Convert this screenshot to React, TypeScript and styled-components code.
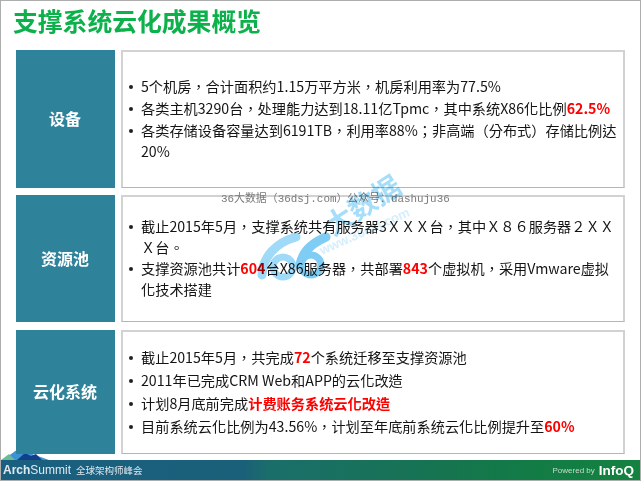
import styled, { createGlobalStyle } from 'styled-components';

const GlobalStyle = createGlobalStyle`
  html, body {
    margin: 0;
    padding: 0;
    background: #fff;
  }
`;

type Part = { text: string; red?: boolean };
type Item = Part[];
type Section = { label: string; height: number; gap: number; spacing: number; items: Item[] };

const sections: Section[] = [
  {
    label: '设备',
    height: 138,
    gap: 7,
    spacing: 1,
    items: [
      [{ text: '5个机房，合计面积约1.15万平方米，机房利用率为77.5%' }],
      [{ text: '各类主机3290台，处理能力达到18.11亿Tpmc，其中系统X86化比例' }, { text: '62.5%', red: true }],
      [{ text: '各类存储设备容量达到6191TB，利用率88%；非高端（分布式）存储比例达20%' }],
    ],
  },
  {
    label: '资源池',
    height: 127,
    gap: 8,
    spacing: 0,
    items: [
      [{ text: '截止2015年5月，支撑系统共有服务器3ＸＸＸ台，其中Ｘ８６服务器２ＸＸＸ台。' }],
      [
        { text: '支撑资源池共计' },
        { text: '604', red: true },
        { text: '台X86服务器，共部署' },
        { text: '843', red: true },
        { text: '个虚拟机，采用Vmware虚拟化技术搭建' },
      ],
    ],
  },
  {
    label: '云化系统',
    height: 124,
    gap: 0,
    spacing: 2,
    items: [
      [{ text: '截止2015年5月，共完成' }, { text: '72', red: true }, { text: '个系统迁移至支撑资源池' }],
      [{ text: '2011年已完成CRM Web和APP的云化改造' }],
      [{ text: '计划8月底前完成' }, { text: '计费账务系统云化改造', red: true }],
      [{ text: '目前系统云化比例为43.56%，计划至年底前系统云化比例提升至' }, { text: '60%', red: true }],
    ],
  },
];

// 36大数据 stamp across the middle of the slide
const Watermark = () => (
  <WatermarkArt viewBox="0 0 170 105" aria-hidden="true">
    <g fill="none" strokeLinecap="round">
      <path d="M12 100C13 82 25 68 46 62" stroke="#9fdaf8" strokeWidth="9" />
      <circle cx="33" cy="92" r="10" stroke="#9fdaf8" strokeWidth="7" />
      <path d="M50 90C52 77 62 68 76 62" stroke="#7fcdf5" strokeWidth="9" />
      <circle cx="61" cy="90" r="10" stroke="#7fcdf5" strokeWidth="7" />
    </g>
    <text
      transform="translate(83 62) rotate(-33)"
      fontSize="28"
      fontWeight="700"
      fill="#a6def9"
      fontFamily="'Noto Sans CJK SC', sans-serif"
    >
      大数据
    </text>
    <text
      transform="translate(72 80) rotate(-24)"
      fontSize="13"
      fontWeight="700"
      fill="#d6effc"
      fontFamily="'Liberation Sans', sans-serif"
    >
      www.36dsj.com
    </text>
  </WatermarkArt>
);

export default function App() {
  return (
    <Page>
      <GlobalStyle />
      <Slide>
        <Peak viewBox="0 0 50 11" aria-hidden="true">
          <polygon points="2,11 17,0 48,11" fill="#3a93d2" />
          <polygon points="0,11 8,5 14,11" fill="#6fb89a" />
          <polygon points="16,11 24,4 30,7 35,5 41,11" fill="#123f8c" />
        </Peak>
        <Title>支撑系统云化成果概览</Title>
        <Rows>
          {sections.map((s) => (
            <Row key={s.label} $height={s.height} $gap={s.gap}>
              <Label>{s.label}</Label>
              <Box>
                <List $spacing={s.spacing}>
                  {s.items.map((item, i) => (
                    <Bullet key={i}>
                      {item.map((p, j) => (p.red ? <Red key={j}>{p.text}</Red> : <span key={j}>{p.text}</span>))}
                    </Bullet>
                  ))}
                </List>
              </Box>
            </Row>
          ))}
        </Rows>
        <Notice>36大数据（36dsj.com）公众号：dashuju36</Notice>
        <Watermark />
      </Slide>
      <Footer>
        <Brand>
          <b>Arch</b>Summit
        </Brand>
        <BrandCn>全球架构师峰会</BrandCn>
        <Powered>
          Powered by <InfoQ>InfoQ</InfoQ>
        </Powered>
      </Footer>
    </Page>
  );
}

const Page = styled.div`
  width: 641px;
  height: 481px;
  box-sizing: border-box;
  border: 1px solid #adadad;
  display: flex;
  flex-direction: column;
  overflow: hidden;
  font-family: 'Noto Sans CJK TC', 'Liberation Sans', sans-serif;
`;
const Slide = styled.div`
  position: relative;
  flex: 1;
  min-height: 0;
  padding: 0 15px;
`;
const Title = styled.h1`
  margin: 0 0 0 -3px;
  height: 49px;
  padding-top: 2px;
  box-sizing: border-box;
  font-family: 'Noto Sans CJK SC', sans-serif;
  font-size: 24.8px;
  line-height: 34px;
  font-weight: 700;
  color: #0db14b;
`;
const Rows = styled.div`
  position: relative;
  display: flex;
  flex-direction: column;
`;
const Row = styled.div<{ $height: number; $gap: number }>`
  display: flex;
  gap: 6px;
  height: ${(p) => p.$height}px;
  margin-bottom: ${(p) => p.$gap}px;
`;
const Label = styled.div`
  width: 99px;
  flex: none;
  box-sizing: border-box;
  padding: 0 1px 2px 0;
  display: flex;
  align-items: center;
  justify-content: center;
  background: #2e8299;
  color: #fff;
  font-family: 'Noto Sans CJK SC', sans-serif;
  font-size: 16px;
  font-weight: 700;
`;
const Box = styled.div`
  flex: 1;
  min-width: 0;
  box-sizing: border-box;
  display: flex;
  align-items: center;
  background: #fff;
  border: 2px solid #d2d2d2;
  border-bottom: 1px solid #b5b5b5;
  padding: 0 3px 2px 3px;
`;
const List = styled.ul<{ $spacing: number }>`
  margin: 0;
  padding: 0;
  list-style: none;
  display: flex;
  flex-direction: column;
  gap: ${(p) => p.$spacing}px;
`;
const Bullet = styled.li`
  position: relative;
  padding-left: 15px;
  font-size: 14.2px;
  line-height: 21px;
  color: #141414;

  &::before {
    content: '';
    position: absolute;
    left: 3px;
    top: 9px;
    width: 4px;
    height: 4px;
    border-radius: 50%;
    background: #222;
  }
`;
const Red = styled.span`
  color: #ff0000;
  font-weight: 700;
`;
const Notice = styled.div`
  position: absolute;
  left: 220px;
  top: 191px;
  font-family: 'Liberation Mono', 'Noto Sans CJK SC', monospace;
  font-size: 10.9px;
  line-height: 14px;
  color: #7a7a7a;
  white-space: nowrap;
`;
const WatermarkArt = styled.svg`
  position: absolute;
  left: 249px;
  top: 174px;
  width: 170px;
  height: 105px;
  overflow: visible;
  mix-blend-mode: multiply;
  pointer-events: none;
`;
const Peak = styled.svg`
  position: absolute;
  left: 0;
  bottom: 0;
  width: 50px;
  height: 11px;
`;
const Footer = styled.div`
  flex: none;
  height: 20px;
  display: flex;
  align-items: center;
  padding: 0 6px 0 2px;
  box-sizing: border-box;
  color: #dfe9ee;
  background: linear-gradient(90deg, #1b5f80 0%, #1a6079 38%, #1a6e6a 42%, #16744f 70%, #127b46 82%, #14823f 100%);
`;
const Brand = styled.span`
  font-family: 'Liberation Sans', sans-serif;
  font-size: 12px;
  margin-right: 5px;
`;
const BrandCn = styled.span`
  font-family: 'Noto Sans CJK SC', sans-serif;
  font-size: 9.5px;
`;
const Powered = styled.span`
  margin-left: auto;
  font-family: 'Liberation Sans', sans-serif;
  font-size: 8px;
  color: #c9dccf;
  display: flex;
  align-items: center;
  gap: 4px;
`;
const InfoQ = styled.b`
  font-size: 13.5px;
  color: #fff;
`;
